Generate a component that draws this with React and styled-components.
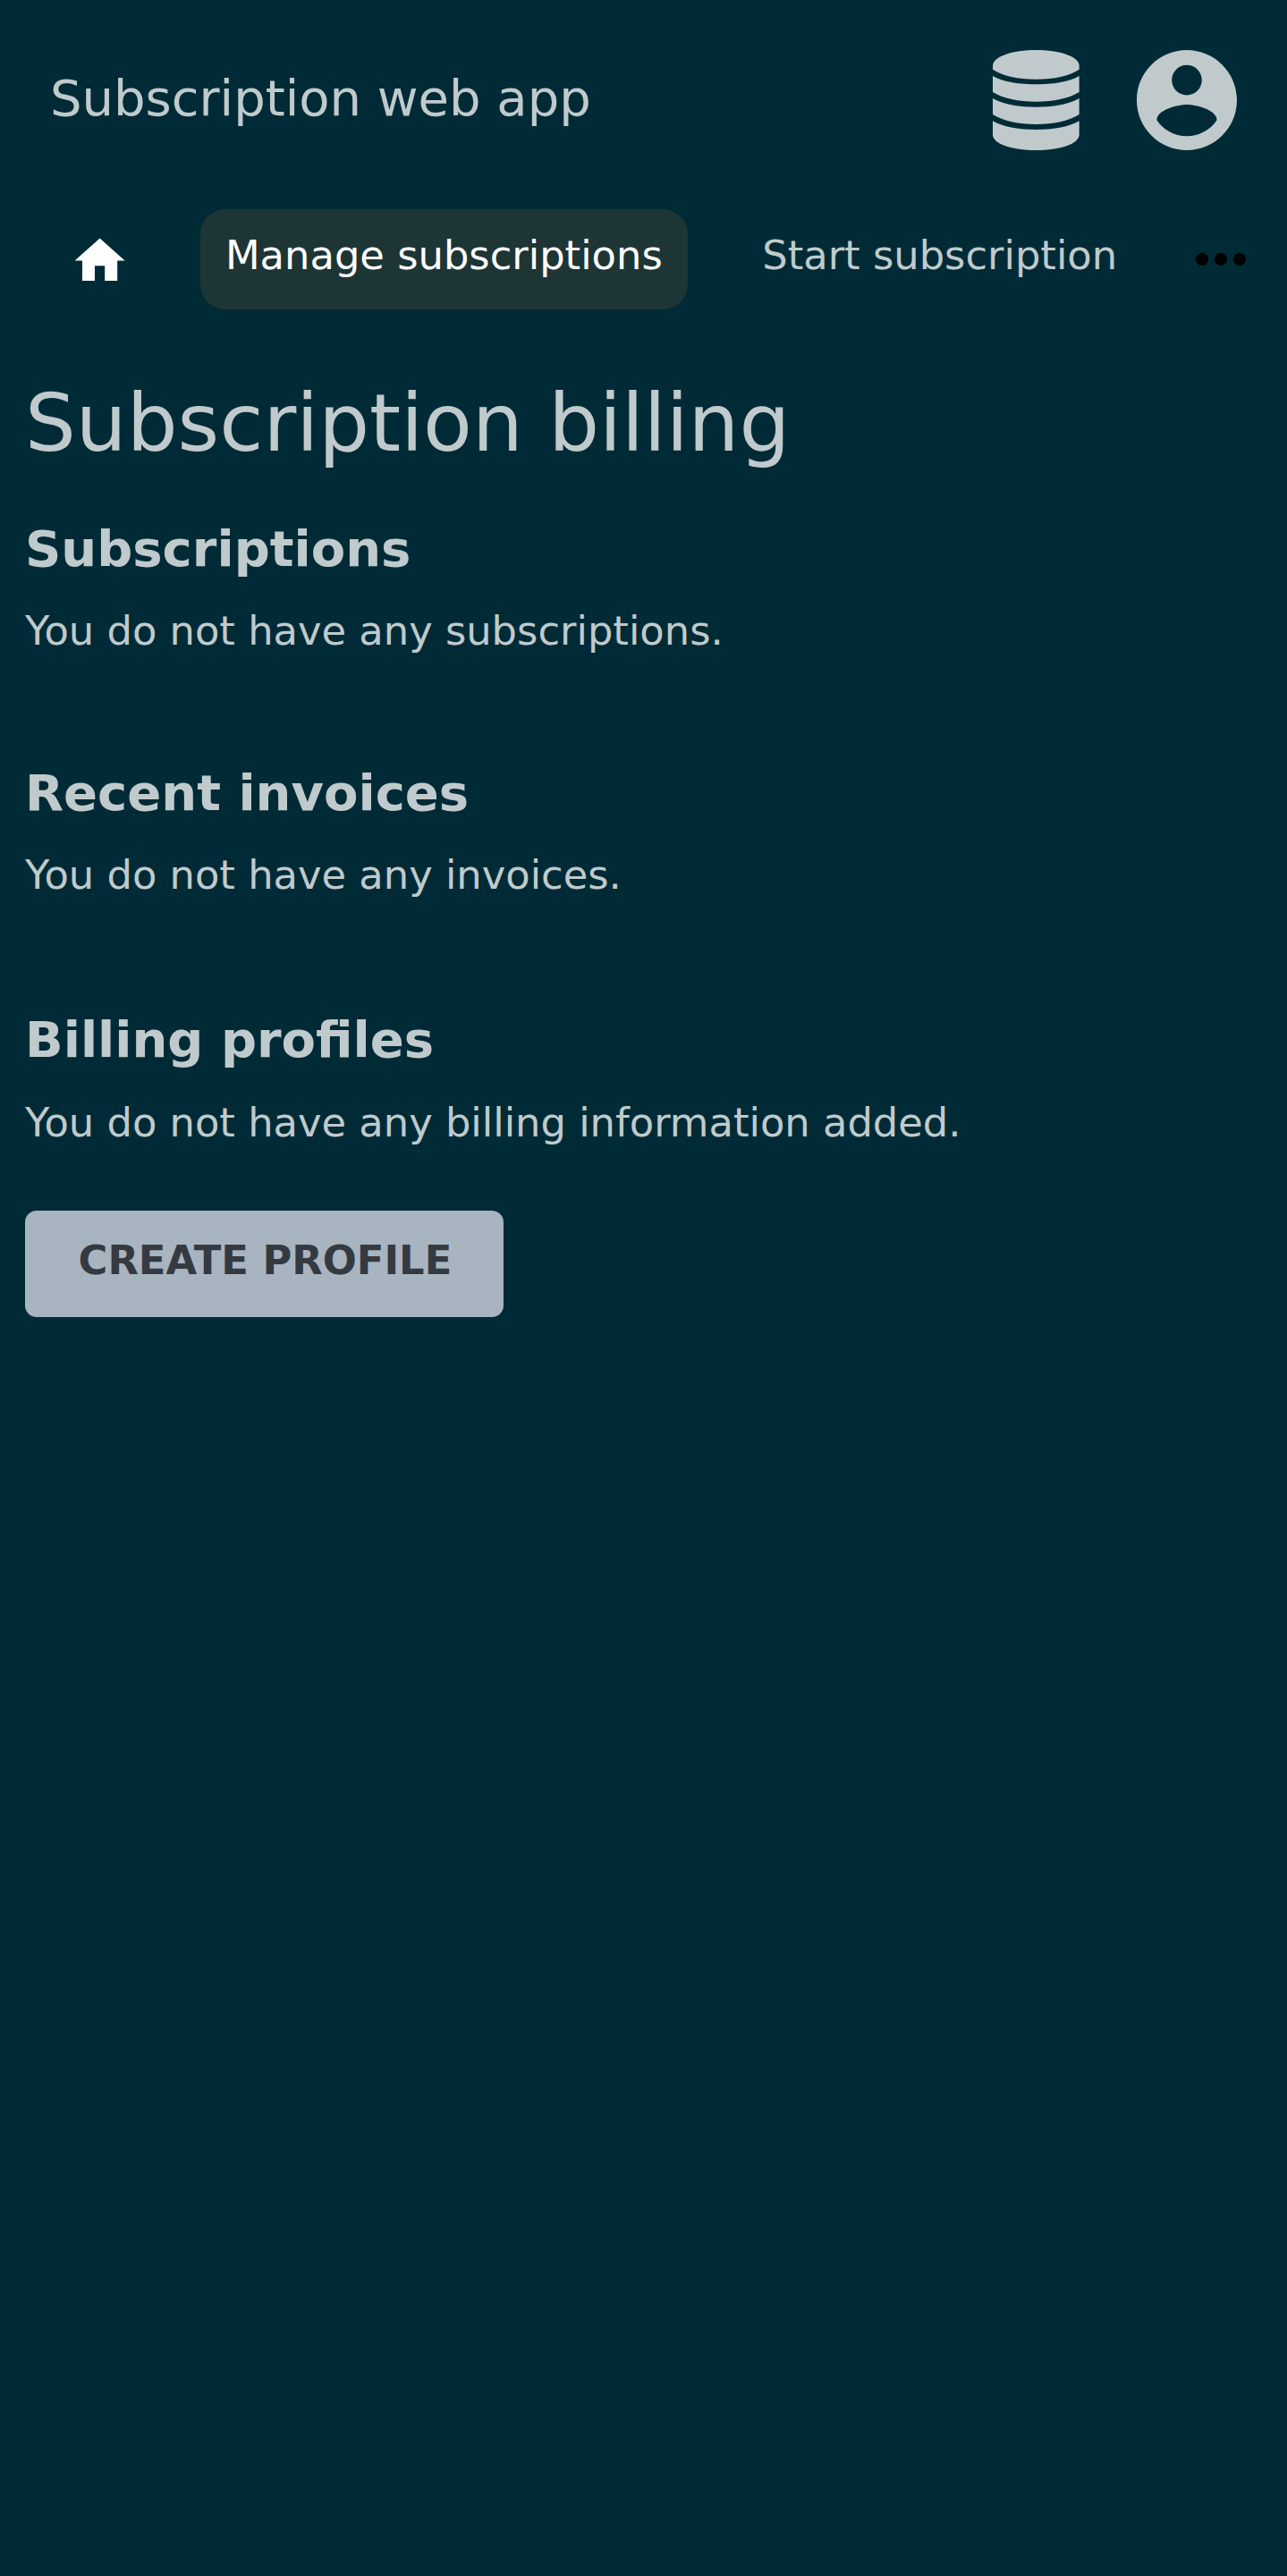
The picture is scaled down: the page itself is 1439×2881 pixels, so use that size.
import React from 'react';
import styled, { createGlobalStyle } from 'styled-components';

const GlobalStyle = createGlobalStyle`
  * { box-sizing: border-box; }
  body {
    margin: 0;
    background: #002b36;
    color: #c0cacc;
    font-family: "DejaVu Sans", sans-serif;
    font-size: 44.8px;
  }
`;

const Page = styled.div`
  min-height: 2881px;
  background: #002b36;
`;

const Header = styled.header`
  display: flex;
  align-items: center;
  justify-content: space-between;
  height: 224px;
  padding: 0 56.4px 0 56px;
`;

const Brand = styled.div`
  font-size: 56px;
  line-height: 66px;
  padding-bottom: 4px;
`;

const HeaderIcons = styled.div`
  display: flex;
  align-items: center;
  gap: 64px;
`;

const Icon = styled.svg`
  display: block;
  flex: none;
  width: ${(p) => p.$w}px;
  height: ${(p) => p.$h}px;
  fill: ${(p) => p.$color || 'currentColor'};
`;

const Nav = styled.nav`
  display: flex;
  align-items: center;
  height: 132.8px;
  padding: 0 32px 0 78.4px;
`;

const NavItem = styled.a`
  height: 112px;
  padding: 25px 28px 0;
  border-radius: 28px;
  line-height: 53px;
  white-space: nowrap;
  color: ${(p) => (p.$active ? '#fff' : '#c0cacc')};
  background: ${(p) => (p.$active ? '#1e3535' : 'transparent')};
  margin-left: ${(p) => p.$gap}px;
`;

const HomeLink = styled.a`
  padding-top: 3px;
`;

const MoreButton = styled.a`
  margin-left: auto;
`;

const Main = styled.main`
  padding: 64.2px 28px 0;
`;

const Title = styled.h1`
  margin: 0;
  font-size: 89.6px;
  font-weight: 400;
  line-height: 104px;
`;

const Section = styled.section`
  margin-top: ${(p) => p.$top}px;
`;

const SectionTitle = styled.h2`
  margin: 0;
  font-size: 56px;
  font-weight: 700;
  line-height: 66px;
`;

const Text = styled.p`
  margin: ${(p) => p.$top || 33}px 0 0;
  line-height: 52px;
`;

const Button = styled.button`
  display: block;
  margin-top: 72.4px;
  width: 535.3px;
  height: 119px;
  padding: 0 0 8px 59.5px;
  text-align: left;
  border: 0;
  border-radius: 13px;
  background: #a8b4c0;
  color: #343a40;
  font: 700 44.8px "DejaVu Sans", sans-serif;
  white-space: nowrap;
`;

export default function App() {
  return (
    <Page>
      <GlobalStyle />
      <Header>
        <Brand>Subscription web app</Brand>
        <HeaderIcons>
          <Icon viewBox="0 0 290 336" $w={96.7} $h={112}>
            <path d="M0 53C0 22 65 0 145 0S290 22 290 53V65C258 87 203 98 145 98S32 87 0 65Z" />
            <path d="M0 87C38 108 90 115 145 115S252 108 290 87V141C255 163 203 173 145 173S35 163 0 141Z" />
            <path d="M0 162C38 183 90 191 145 191S252 183 290 162V216C255 238 203 249 145 249S35 238 0 216Z" />
            <path d="M0 238C38 259 90 267 145 267S252 259 290 238V284C290 314 225 336 145 336S0 314 0 284Z" />
          </Icon>
          <Icon viewBox="2 2 20 20" $w={112} $h={112}>
            <path d="M12 2C6.48 2 2 6.48 2 12s4.48 10 10 10 10-4.48 10-10S17.52 2 12 2zm0 3c1.66 0 3 1.34 3 3s-1.34 3-3 3-3-1.34-3-3 1.34-3 3-3zm0 14.2c-2.5 0-4.71-1.28-6-3.22.03-1.99 4-3.08 6-3.08 1.99 0 5.97 1.09 6 3.08-1.29 1.94-3.5 3.22-6 3.22z" />
          </Icon>
        </HeaderIcons>
      </Header>
      <Nav>
        <HomeLink>
          <Icon viewBox="0 0 24 24" $w={67.2} $h={67.2} $color="#fff">
            <path d="M10 20v-6h4v6h5v-8h3L12 3 2 12h3v8z" />
          </Icon>
        </HomeLink>
        <NavItem $active $gap={78.4}>Manage subscriptions</NavItem>
        <NavItem $gap={55.5}>Start subscription</NavItem>
        <MoreButton>
          <Icon viewBox="0 0 24 24" $w={84} $h={84} $color="#000">
            <circle cx="6" cy="12" r="2" />
            <circle cx="12" cy="12" r="2" />
            <circle cx="18" cy="12" r="2" />
          </Icon>
        </MoreButton>
      </Nav>
      <Main>
        <Title>Subscription billing</Title>
        <Section $top={56}>
          <SectionTitle>Subscriptions</SectionTitle>
          <Text>You do not have any subscriptions.</Text>
        </Section>
        <Section $top={122}>
          <SectionTitle>Recent invoices</SectionTitle>
          <Text>You do not have any invoices.</Text>
        </Section>
        <Section $top={125}>
          <SectionTitle>Billing profiles</SectionTitle>
          <Text $top={34}>You do not have any billing information added.</Text>
          <Button>CREATE PROFILE</Button>
        </Section>
      </Main>
    </Page>
  );
}
